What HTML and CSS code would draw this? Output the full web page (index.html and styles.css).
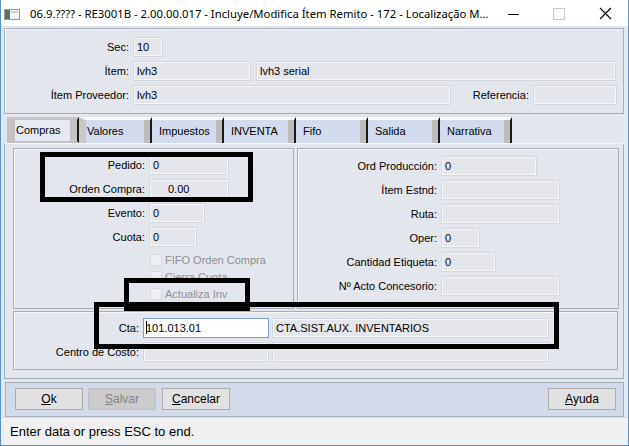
FILE: index.html
```html
<!DOCTYPE html>
<html lang="es">
<head>
<meta charset="UTF-8">
<meta name="viewport" content="width=device-width, initial-scale=1.0">
<title>Incluye/Modifica Ítem Remito</title>
<link rel="stylesheet" href="styles.css">
</head>
<body>
<div class="window">
  <div class="titlebar">
    <svg class="app-icon" width="16" height="16" viewBox="0 0 16 16">
      <rect x="0.5" y="3.5" width="15" height="10" fill="#f4f4f4" stroke="#9a9a9a"/>
      <rect x="1" y="4" width="5" height="9" fill="#56706a"/>
      <rect x="7" y="5" width="7" height="2" fill="#c9c9c9"/>
    </svg>
    <span class="title">06.9.???? - RE3001B - 2.00.00.017 - Incluye/Modifica Ítem Remito - 172 - Localização M...</span>
    <div class="controls">
      <svg class="ctl" width="46" height="26" viewBox="0 0 46 26"><line x1="18" y1="14.5" x2="29" y2="14.5" stroke="#000"/></svg>
      <svg class="ctl" width="46" height="26" viewBox="0 0 46 26"><rect x="17.5" y="8.5" width="11" height="11" fill="none" stroke="#c8c8c8"/></svg>
      <svg class="ctl" width="46" height="26" viewBox="0 0 46 26"><path d="M18 8 L29 19 M29 8 L18 19" stroke="#000" stroke-width="1.1"/></svg>
    </div>
  </div>

  <div class="client">
    <div class="frame header">
      <div class="row"><span class="lbl">Sec:</span><span class="field w30">10</span></div>
      <div class="row"><span class="lbl">Ítem:</span><span class="field w118">lvh3</span><span class="field w360 ml5">lvh3 serial</span></div>
      <div class="row"><span class="lbl">Ítem Proveedor:</span><span class="field w318">lvh3</span><span class="lbl ref">Referencia:</span><span class="field w84"></span></div>
    </div>

    <div class="tabs">
      <span class="tab active">Compras</span>
      <span class="tab after-active">Valores</span>
      <span class="tab">Impuestos</span>
      <span class="tab">INVENTA</span>
      <span class="tab">Fifo</span>
      <span class="tab">Salida</span>
      <span class="tab">Narrativa</span>
    </div>

    <div class="tabpage">
      <div class="groups">
        <div class="group left">
          <div class="row"><span class="lbl">Pedido:</span><span class="field w80">0</span></div>
          <div class="row"><span class="lbl">Orden Compra:</span><span class="field w80 num">0.00</span></div>
          <div class="row"><span class="lbl">Evento:</span><span class="field w56">0</span></div>
          <div class="row"><span class="lbl">Cuota:</span><span class="field w48">0</span></div>
          <div class="checks">
            <div class="check"><span class="box"></span>FIFO Orden Compra</div>
            <div class="check"><span class="box"></span>Cierra Cuota</div>
            <div class="check"><span class="box"></span>Actualiza Inv</div>
          </div>
        </div>
        <div class="group right">
          <div class="row"><span class="lbl">Ord Producción:</span><span class="field w96">0</span></div>
          <div class="row"><span class="lbl">Ítem Estnd:</span><span class="field w119"></span></div>
          <div class="row"><span class="lbl">Ruta:</span><span class="field w119"></span></div>
          <div class="row"><span class="lbl">Oper:</span><span class="field w39">0</span></div>
          <div class="row"><span class="lbl">Cantidad Etiqueta:</span><span class="field w55">0</span></div>
          <div class="row"><span class="lbl">Nº Acto Concesorio:</span><span class="field w119"></span></div>
        </div>
      </div>
      <div class="group bottom">
        <div class="row"><span class="lbl">Cta:</span><span class="field w126 focus"><span class="caret"></span>101.013.01</span><span class="field w277 ml3">CTA.SIST.AUX. INVENTARIOS</span></div>
        <div class="row"><span class="lbl">Centro de Costo:</span><span class="field w126"></span><span class="field w277 ml3"></span></div>
      </div>
    </div>

    <div class="buttonbar">
      <button class="btn"><u>O</u>k</button>
      <button class="btn" disabled><u>S</u>alvar</button>
      <button class="btn cancel"><u>C</u>ancelar</button>
      <button class="btn help"><u>A</u>yuda</button>
    </div>
  </div>

  <div class="statusbar">Enter data or press ESC to end.</div>

  <div class="mark m1"></div>
  <div class="mark m2"></div>
  <div class="mark m3"></div>
</div>
</body>
</html>
```

FILE: styles.css
```css
body {
  margin: 0;
  background-color: #fff;
  font-family: "Liberation Sans", Arial, sans-serif;
  font-size: 11px;
  color: #000;
}
.window {
  position: relative;
  width: 629px;
  height: 446px;
  box-sizing: border-box;
  border: 1px solid #5b93c8;
  border-top: none;
  background-color: #e3e6ed;
  overflow: hidden;
}
.titlebar {
  height: 26px;
  background-color: #fff;
  display: flex;
  align-items: center;
}
.app-icon {
  flex: none;
  margin-left: 3px;
  margin-top: 1px;
}
.title {
  flex: 1;
  min-width: 0;
  margin-left: 10px;
  font-family: "Noto Sans", sans-serif;
  font-size: 11.3px;
  white-space: nowrap;
}
.controls {
  flex: none;
  display: flex;
}
.client {
  padding: 2px 4px 0 3px;
}
.frame {
  border: 1px solid #a7aebb;
  box-shadow: inset 1px 1px 0 #f7f8fa;
}
.header {
  height: 86px;
  box-sizing: border-box;
  padding-top: 8px;
  display: flex;
  flex-direction: column;
  gap: 4px;
}
.row {
  display: flex;
  align-items: center;
  height: 20px;
}
.lbl {
  text-align: right;
  margin-right: 4px;
  white-space: nowrap;
  flex: none;
}
.header .lbl { width: 124px; }
.header .lbl.ref { width: 78px; }
.left .lbl { width: 131px; }
.right .lbl { width: 139px; }
.bottom .lbl { width: 125px; }

.field {
  height: 20px;
  box-sizing: border-box;
  border: 1px solid #d3d6dc;
  box-shadow: inset 0 0 0 1px #f6f7f9;
  background-color: #e4e6eb;
  padding-left: 3px;
  line-height: 18px;
  white-space: nowrap;
  overflow: hidden;
  flex: none;
}
.field.num { padding-left: 18px; }
.field.focus {
  background-color: #fff;
  border-color: #7a9fcf;
  box-shadow: none;
  padding-left: 2px;
}
.caret {
  display: inline-block;
  width: 1px;
  height: 13px;
  background-color: #000;
  vertical-align: -2px;
  margin-right: -1px;
}
.ml5 { margin-left: 5px; }
.ml3 { margin-left: 3px; }
.w30 { width: 30px; }
.w39 { width: 39px; }
.w48 { width: 48px; }
.w55 { width: 55px; }
.w56 { width: 56px; }
.w80 { width: 80px; }
.w84 { width: 84px; }
.w96 { width: 96px; }
.w118 { width: 118px; }
.w119 { width: 119px; }
.w126 { width: 126px; }
.w277 { width: 277px; }
.w318 { width: 318px; }
.w360 { width: 360px; }

.tabs {
  display: flex;
  margin-top: 3px;
  padding-left: 3px;
  height: 26px;
}
.tab {
  width: 72px;
  height: 26px;
  box-sizing: border-box;
  border-top: 3px solid #fbfbfc;
  border-right: 2px solid #1a1a1a;
  background-color: #d3dcef;
  box-shadow: inset -6px 0 0 #bdbdbd;
  padding-left: 7px;
  line-height: 23px;
  font-size: 11px;
  white-space: nowrap;
}
.tab.active {
  width: 72px;
  border-top: 3px solid #c3c3c3;
  border-left: 8px solid #c3c3c3;
  border-bottom: 2px solid #c3c3c3;
  background-color: #e6eaf2;
  box-shadow: inset -7px 0 0 #c3c3c3;
  padding-left: 1px;
  line-height: 21px;
}
.tab.after-active {
  width: 73px;
  border-left: 7px solid #c8c8c8;
  padding-left: 1px;
}
.tabpage {
  height: 236px;
  box-sizing: border-box;
  border: 1px solid #a7aebb;
  border-top-color: #f7f8fa;
  padding: 4px 3px 0 8px;
}
.groups {
  display: flex;
  gap: 3px;
}
.group {
  border: 1px solid #a7aebb;
  box-shadow: inset 1px 1px 0 #f7f8fa;
  box-sizing: border-box;
  display: flex;
  flex-direction: column;
  gap: 4px;
}
.left {
  width: 281px;
  height: 161px;
  padding-top: 6px;
}
.right {
  width: 322px;
  height: 161px;
  padding-top: 7px;
}
.bottom {
  width: 605px;
  height: 59px;
  margin-top: 2px;
  padding-top: 6px;
}
.checks {
  margin-top: 3px;
  padding-left: 136px;
}
.check {
  height: 17px;
  display: flex;
  align-items: flex-start;
  color: #8d8f94;
  font-size: 11px;
  line-height: 12px;
}
.box {
  width: 12px;
  height: 12px;
  box-sizing: border-box;
  border: 1px solid #d8dadf;
  background-color: #eeeff2;
  margin-right: 3px;
}

.buttonbar {
  margin-top: 3px;
  margin-left: 1px;
  height: 35px;
  box-sizing: border-box;
  border: 1px solid #a7aebb;
  background-color: #d3dbeb;
  display: flex;
  align-items: flex-start;
  gap: 5px;
  padding: 5px 7px 0 9px;
}
.btn {
  width: 68px;
  height: 22px;
  border: 1px solid #adadad;
  background-color: #e1e1e1;
  font-family: "Liberation Sans", Arial, sans-serif;
  font-size: 12px;
  color: #000;
  padding: 0;
}
.btn:disabled {
  background-color: #cccccc;
  border-color: #bfbfbf;
  color: #838383;
}
.btn.cancel { margin-left: 1px; }
.btn.help { margin-left: auto; }

.statusbar {
  height: 28px;
  box-sizing: border-box;
  border-top: 1px solid #dcdcdc;
  background-color: #f0f0f0;
  padding-left: 9px;
  line-height: 27px;
  font-size: 13px;
}

.mark {
  position: absolute;
  border: 5px solid #000;
  box-sizing: border-box;
}
.m1 { left: 39px; top: 152px; width: 213px; height: 50px; }
.m2 { left: 123px; top: 278px; width: 126px; height: 33px; }
.m3 { left: 93px; top: 302px; width: 465px; height: 47px; }
```
